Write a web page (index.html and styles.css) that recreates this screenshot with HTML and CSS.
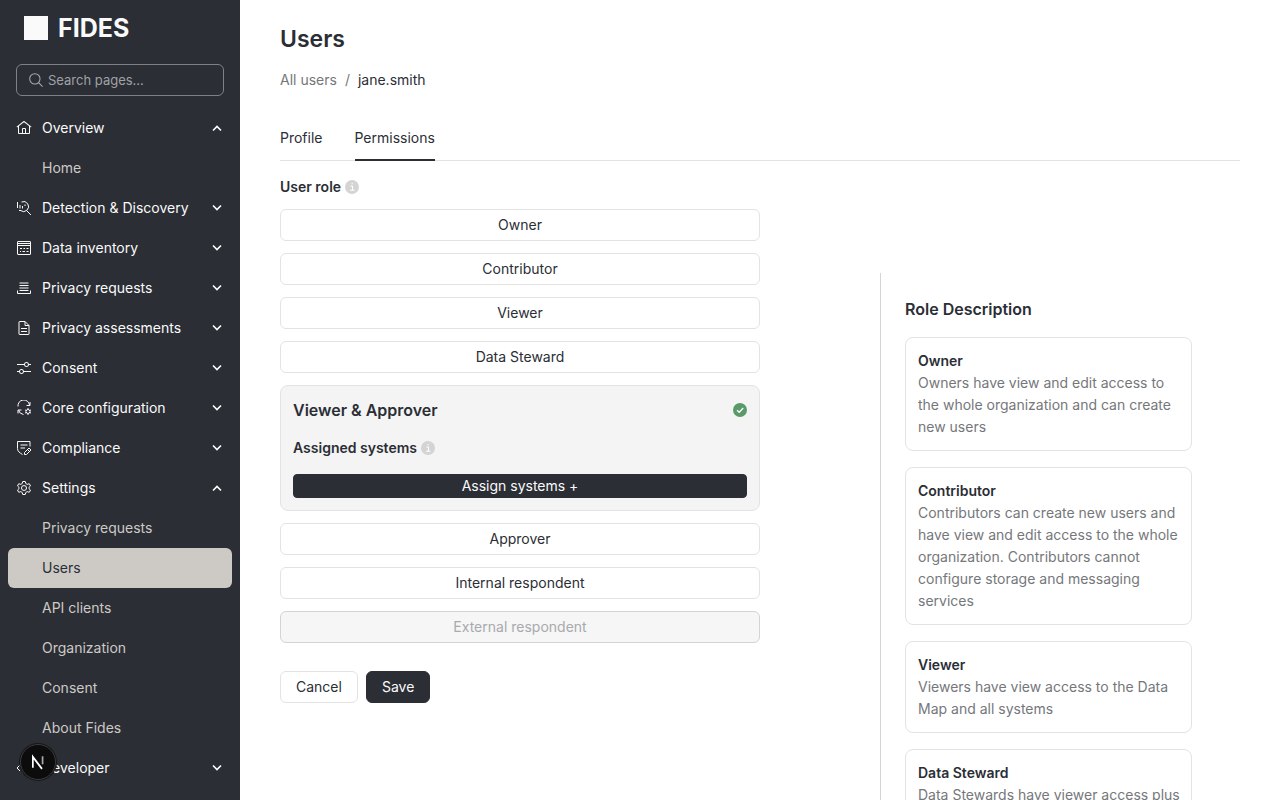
FILE: index.html
```html
<!DOCTYPE html>
<html lang="en">
<head>
    <meta charset="UTF-8">
    <meta name="viewport" content="width=device-width, initial-scale=1.0">
    <title>Users - Fides</title>
    <link rel="stylesheet" href="styles.css">
</head>
<body>
    <!-- shared chevrons -->
    <svg class="sprite" aria-hidden="true">
        <symbol id="down" viewBox="0 0 14 14"><path d="M3 4.500l4 4 4-4" fill="none" stroke="currentColor" stroke-width="1.700"/></symbol>
        <symbol id="up" viewBox="0 0 14 14"><path d="M3 9.500l4-4 4 4" fill="none" stroke="currentColor" stroke-width="1.700"/></symbol>
        <symbol id="info" viewBox="0 0 14 14"><circle cx="7" cy="7" r="7" fill="#d4d4d4"/><path d="M5.500 6h2v4M5 10.200h4.500M6.500 3.700h1.300" fill="none" stroke="#fff" stroke-width="1"/></symbol>
    </svg>
    <div class="layout">
        <nav class="sidebar">
            <a class="logo" href="#"><span class="logo-mark"></span>FIDES</a>
            <label class="search">
                <svg viewBox="0 0 16 16"><circle cx="6.700" cy="6.700" r="5.900"/><path d="M10.900 10.900l4.600 4.600"/></svg>
                <input type="text" placeholder="Search pages..." aria-label="Search pages">
            </label>
            <div class="menu">
                <button class="group">
                    <svg class="icon" viewBox="0 0 32 32"><path class="fill" d="M16.6123,2.2138a1.01,1.01,0,0,0-1.2427,0L1,13.4194l1.2427,1.5717L4,13.6208V26a2.0041,2.0041,0,0,0,2,2H26a2.0037,2.0037,0,0,0,2-2V13.63L29.7573,15,31,13.4282ZM18,26H14V18h4Zm2,0V18a2.0023,2.0023,0,0,0-2-2H14a2.002,2.002,0,0,0-2,2v8H6V12.0615l10-7.79,10,7.8005V26Z"/></svg>
                    <span>Overview</span><svg class="chevron"><use href="#up"/></svg>
                </button>
                <a class="item" href="#">Home</a>
                <button class="group">
                    <svg class="icon" viewBox="0 0 32 32"><path d="M11 4a10 10 0 1 1-2 17M22 22l8 8M3 4v12M8 10v7M13 12v5M18 9v3M6 21h4"/></svg>
                    <span>Detection &amp; Discovery</span><svg class="chevron"><use href="#down"/></svg>
                </button>
                <button class="group">
                    <svg class="icon" viewBox="0 0 32 32"><rect x="3" y="3" width="26" height="26" rx="1"/><path d="M3 7h26M3 11h26M8 17h4M15 17h3M21 17h4M8 23h2M13 23h5M21 23h4"/></svg>
                    <span>Data inventory</span><svg class="chevron"><use href="#down"/></svg>
                </button>
                <button class="group">
                    <svg class="icon" viewBox="0 0 32 32"><path d="M7 6h18M7 11h18M7 16h18M7 21h18M3 21v6h26v-6"/></svg>
                    <span>Privacy requests</span><svg class="chevron"><use href="#down"/></svg>
                </button>
                <button class="group">
                    <svg class="icon" viewBox="0 0 32 32"><path d="M7 3h11l8 8v17a1 1 0 0 1-1 1H7a1 1 0 0 1-1-1V4a1 1 0 0 1 1-1zM18 3v8h8M10 17h12M10 23h12"/></svg>
                    <span>Privacy assessments</span><svg class="chevron"><use href="#down"/></svg>
                </button>
                <button class="group">
                    <svg class="icon" viewBox="0 0 32 32"><path class="fill" d="M30,8h-4.1c-0.5-2.3-2.5-4-4.9-4s-4.4,1.7-4.9,4H2v2h14.1c0.5,2.3,2.5,4,4.9,4s4.4-1.7,4.9-4H30V8z M21,12c-1.7,0-3-1.3-3-3s1.3-3,3-3s3,1.3,3,3S22.7,12,21,12z M2,24h4.1c0.5,2.3,2.5,4,4.9,4s4.4-1.7,4.9-4H30v-2H15.9c-0.5-2.3-2.5-4-4.9-4s-4.4,1.7-4.9,4H2V24z M11,20c1.7,0,3,1.3,3,3s-1.3,3-3,3s-3-1.3-3-3S9.3,20,11,20z"/></svg>
                    <span>Consent</span><svg class="chevron"><use href="#down"/></svg>
                </button>
                <button class="group">
                    <svg class="icon" viewBox="0 0 32 32"><path d="M4 13A11.500 11.500 0 0 1 27 10M28 4v7h-7M15 29A12 12 0 0 1 5 20M4 27v-7h7"/><circle cx="24" cy="23" r="4"/><path d="M24 16v3M24 27v3M18 20l3 1M27 25l3 1M18 26l3-1M27 21l3-1"/></svg>
                    <span>Core configuration</span><svg class="chevron"><use href="#down"/></svg>
                </button>
                <button class="group">
                    <svg class="icon" viewBox="0 0 32 32"><path d="M28 13V3H3v14c0 6 5 9 10 12M9 10h14M9 16h9M17 29v-4l9-9 4 4-9 9zM23 19l4 4"/></svg>
                    <span>Compliance</span><svg class="chevron"><use href="#down"/></svg>
                </button>
                <button class="group">
                    <svg class="icon" viewBox="0 0 32 32"><path d="M13.500 3h5l1 4 3 1.700 4-1.200 2.500 4.400-3 2.800v2.600l3 2.800-2.500 4.400-4-1.200-3 1.700-1 4h-5l-1-4-3-1.700-4 1.200L3 20.100l3-2.800v-2.600l-3-2.800 2.500-4.400 4 1.200 3-1.700z"/><circle cx="16" cy="16" r="5"/></svg>
                    <span>Settings</span><svg class="chevron"><use href="#up"/></svg>
                </button>
                <a class="item" href="#">Privacy requests</a>
                <a class="item active" href="#">Users</a>
                <a class="item" href="#">API clients</a>
                <a class="item" href="#">Organization</a>
                <a class="item" href="#">Consent</a>
                <a class="item" href="#">About Fides</a>
                <button class="group">
                    <svg class="icon" viewBox="0 0 32 32"><path d="M8 10l-6 6 6 6M24 10l6 6-6 6M19 7l-6 18"/></svg>
                    <span>Developer</span><svg class="chevron"><use href="#down"/></svg>
                </button>
            </div>
        </nav>
        <main class="content">
            <h1>Users</h1>
            <div class="breadcrumb"><a href="#">All users</a><span>/</span><strong>jane.smith</strong></div>
            <div class="tabs" role="tablist">
                <button class="tab" role="tab">Profile</button>
                <button class="tab selected" role="tab" aria-selected="true">Permissions</button>
            </div>
            <div class="columns">
                <form class="roles">
                    <div class="label">User role <svg class="info"><use href="#info"/></svg></div>
                    <div class="role-list">
                        <button type="button" class="btn">Owner</button>
                        <button type="button" class="btn">Contributor</button>
                        <button type="button" class="btn">Viewer</button>
                        <button type="button" class="btn">Data Steward</button>
                        <div class="role-card">
                            <div class="role-title">
                                <h2>Viewer &amp; Approver</h2>
                                <svg class="check" viewBox="0 0 14 14"><circle cx="7" cy="7" r="7" fill="#5a9a68"/><path d="M4 7.200l2.200 2.100 4-4.300" fill="none" stroke="#fff" stroke-width="1.300"/></svg>
                            </div>
                            <div class="label">Assigned systems <svg class="info"><use href="#info"/></svg></div>
                            <button type="button" class="btn primary small">Assign systems +</button>
                        </div>
                        <button type="button" class="btn">Approver</button>
                        <button type="button" class="btn">Internal respondent</button>
                        <button type="button" class="btn" disabled>External respondent</button>
                    </div>
                    <div class="actions">
                        <button type="button" class="btn">Cancel</button>
                        <button type="submit" class="btn primary">Save</button>
                    </div>
                </form>
                <aside class="descriptions">
                    <h2>Role Description</h2>
                    <div class="card">
                        <h3>Owner</h3>
                        <p>Owners have view and edit access to the whole organization and can create new users</p>
                    </div>
                    <div class="card">
                        <h3>Contributor</h3>
                        <p>Contributors can create new users and have view and edit access to the whole organization. Contributors cannot configure storage and messaging services</p>
                    </div>
                    <div class="card">
                        <h3>Viewer</h3>
                        <p>Viewers have view access to the Data Map and all systems</p>
                    </div>
                    <div class="card">
                        <h3>Data Steward</h3>
                        <p>Data Stewards have viewer access plus</p>
                    </div>
                </aside>
            </div>
        </main>
    </div>
    <button class="dev-badge" aria-label="Open dev tools">
        <svg viewBox="0 0 14 14"><path d="M2.500 12V2.500l8 10.500" fill="none" stroke="#fff" stroke-width="1.500"/><path d="M11 2v7" stroke="#aaa" stroke-width="1.500"/></svg>
    </button>
</body>
</html>
```
FILE: styles.css
```css
* {
    box-sizing: border-box;
}
body {
    margin: 0;
    font-family: Inter, "Liberation Sans", sans-serif;
    font-size: 14px;
    line-height: 22px;
    color: #2b2e35;
    background-color: #fff;
}
h1, h2, h3, p {
    margin: 0;
}
h1, h2, h3, .label {
    font-weight: 600;
}
h1 {
    font-size: 23px;
    line-height: 32px;
}
h2 {
    font-size: 16px;
    line-height: 24px;
}
h3 {
    font-size: 14px;
}
a {
    color: inherit;
    text-decoration: none;
}
button {
    font: inherit;
    color: inherit;
    cursor: pointer;
}
.sprite {
    display: none;
}
.layout {
    display: flex;
    height: 100vh;
}

/* sidebar */
.sidebar {
    flex: 0 0 240px;
    padding-top: 16px;
    overflow-y: auto;
    scrollbar-width: none;
    background-color: #2b2e35;
    color: #fafafa;
}
.logo {
    display: flex;
    align-items: center;
    gap: 10px;
    height: 24px;
    margin-left: 24px;
    font-size: 25px;
    font-weight: 700;
}
.logo-mark {
    width: 24px;
    height: 24px;
    background-color: #fafafa;
}
.search {
    display: flex;
    align-items: center;
    gap: 5px;
    height: 32px;
    margin: 24px 16px 12px;
    padding: 0 12px;
    border: 1px solid #7e8185;
    border-radius: 6px;
}
.search svg {
    flex: none;
    width: 14px;
    height: 14px;
    fill: none;
    stroke: #a8aaad;
    stroke-width: 1.2;
}
.search input {
    flex: 1;
    min-width: 0;
    padding: 0;
    border: none;
    outline: none;
    background: none;
    color: inherit;
    font: inherit;
    font-size: 13px;
}
.search input::placeholder {
    color: #a0a2a5;
}
.group, .item {
    display: flex;
    align-items: center;
    height: 40px;
}
.group {
    gap: 10px;
    width: 100%;
    padding: 0 16px;
    border: none;
    background: none;
    text-align: left;
}
.group span {
    flex: 1;
}
.icon {
    width: 16px;
    height: 16px;
    fill: none;
    stroke: currentColor;
    stroke-width: 2;
}
.icon .fill {
    fill: currentColor;
    stroke: none;
}
.chevron {
    width: 14px;
    height: 14px;
}
.item {
    margin: 0 8px;
    padding-left: 34px;
    border-radius: 6px;
    color: #cdcac5;
}
.item.active {
    background-color: #cdcac5;
    color: #2b2e35;
}

/* page content */
.content {
    flex: 1;
    min-width: 0;
    padding: 23px 40px;
    overflow-y: auto;
    scrollbar-width: none;
}
.breadcrumb {
    display: flex;
    gap: 8px;
    margin-top: 14px;
    color: #75777b;
}
.breadcrumb strong {
    font-weight: 400;
    color: #2b2e35;
}
.tabs {
    display: flex;
    gap: 32px;
    margin: 24px 0 15px;
    border-bottom: 1px solid #e3e3e4;
}
.tab {
    margin-bottom: -1px;
    padding: 12px 0 10px;
    border: none;
    border-bottom: 2px solid transparent;
    background: none;
}
.tab.selected {
    border-color: #2b2e35;
}
.columns {
    display: grid;
    grid-template-columns: 5fr 3fr;
}
.roles {
    width: 80%;
}
.label {
    display: flex;
    align-items: center;
    gap: 4px;
}
.info, .check {
    width: 14px;
    height: 14px;
}
.role-list {
    display: flex;
    flex-direction: column;
    gap: 12px;
    margin-top: 11px;
}
.btn {
    height: 32px;
    padding: 0 15px;
    border: 1px solid #e3e3e4;
    border-radius: 6px;
    background-color: #fff;
}
.btn:disabled {
    border-color: #d4d4d4;
    background-color: #f6f6f6;
    color: #a8aaad;
    cursor: default;
}
.btn.primary {
    border-color: #2b2e35;
    background-color: #2b2e35;
    color: #fafafa;
}
.btn.small {
    height: 24px;
    border-radius: 4px;
}
.role-card {
    display: flex;
    flex-direction: column;
    padding: 12px;
    border: 1px solid #e3e3e4;
    border-radius: 8px;
    background-color: #f4f4f4;
}
.role-title {
    display: flex;
    align-items: center;
    justify-content: space-between;
}
.role-card .label {
    margin: 15px 0;
}
.actions {
    display: flex;
    gap: 8px;
    margin-top: 28px;
}
.descriptions {
    display: flex;
    flex-direction: column;
    gap: 16px;
    margin-top: 97px;
    padding: 24px 48px 24px 24px;
    border-left: 1px solid #d4d4d4;
}
.card {
    padding: 12px 8px 12px 12px;
    border: 1px solid #e3e3e4;
    border-radius: 8px;
}
.card p {
    color: #75777b;
}

.dev-badge {
    position: fixed;
    left: 20px;
    bottom: 20px;
    display: flex;
    align-items: center;
    justify-content: center;
    width: 36px;
    height: 36px;
    padding: 0;
    border: 1px solid #3a3a3a;
    border-radius: 50%;
    background-color: #0c0c0d;
    box-shadow: 0 0 0 1px #17181b;
}
.dev-badge svg {
    width: 16px;
    height: 16px;
}
```
